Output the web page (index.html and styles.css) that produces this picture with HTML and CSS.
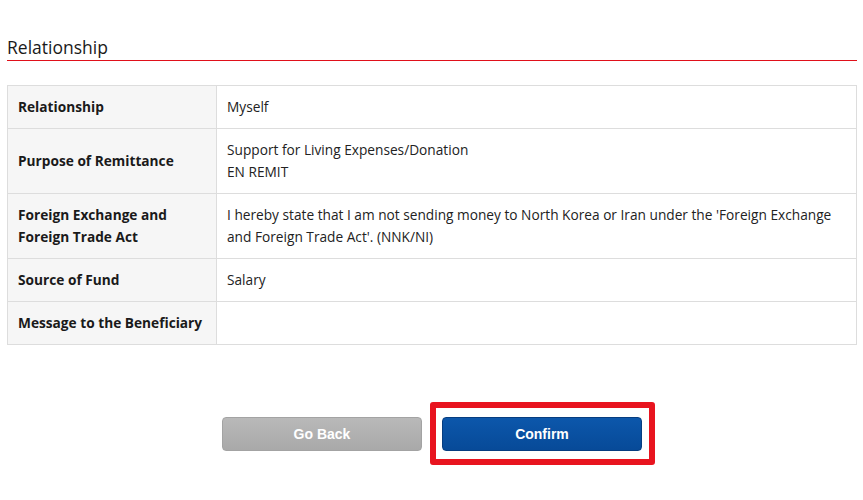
FILE: index.html
```html
<!DOCTYPE html>
<html lang="en">
<head>
<meta charset="utf-8">
<title>Relationship</title>
<link rel="stylesheet" href="styles.css">
</head>
<body>
<div class="page">
  <h2 class="section-title">Relationship</h2>
  <table class="info-table">
    <tr class="row-1">
      <th>Relationship</th>
      <td>Myself</td>
    </tr>
    <tr class="row-2">
      <th>Purpose of Remittance</th>
      <td>Support for Living Expenses/Donation<br>EN REMIT</td>
    </tr>
    <tr class="row-2">
      <th>Foreign Exchange and Foreign Trade Act</th>
      <td>I hereby state that I am not sending money to North Korea or Iran under the 'Foreign Exchange and Foreign Trade Act'. (NNK/NI)</td>
    </tr>
    <tr class="row-1">
      <th>Source of Fund</th>
      <td>Salary</td>
    </tr>
    <tr class="row-1">
      <th>Message to the Beneficiary</th>
      <td></td>
    </tr>
  </table>
  <div class="actions">
    <button class="btn btn-back" type="button">Go Back</button>
    <div class="confirm-wrap">
      <button class="btn btn-confirm" type="button">Confirm</button>
      <span class="highlight"></span>
    </div>
  </div>
</div>
</body>
</html>
```

FILE: styles.css
```css
html, body {
  margin: 0;
  padding: 0;
  background: #ffffff;
}

body {
  font-family: "Open Sans", "DejaVu Sans", sans-serif;
  color: #222222;
  min-height: 500px;
}

.page {
  padding: 32px 6px 40px 7px;
}

.section-title {
  margin: 0;
  font-size: 17.5px;
  font-weight: normal;
  line-height: 26px;
  color: #1a1a1a;
  padding-top: 2px;
  padding-bottom: 0;
  border-bottom: 1px solid #e0101a;
}

.info-table {
  width: 850px;
  margin-top: 24px;
  border-collapse: collapse;
  font-size: 13.7px;
  line-height: 22px;
}

.info-table th,
.info-table td {
  border: 1px solid #dddddd;
  padding: 10px 10px 10px 10px;
  vertical-align: middle;
  text-align: left;
}

.info-table th {
  width: 188px;
  background: #f6f6f6;
  font-weight: bold;
  color: #1a1a1a;
}

.info-table td {
  background: #ffffff;
  color: #222222;
}

.row-1 th, .row-1 td {
  height: 22px;
}

.actions {
  display: flex;
  justify-content: center;
  gap: 20px;
  margin-top: 72px;
}

.confirm-wrap {
  position: relative;
}

.btn {
  display: block;
  width: 200px;
  height: 34px;
  border-radius: 4px;
  font-family: "Liberation Sans", Arial, sans-serif;
  font-size: 14px;
  font-weight: bold;
  color: #ffffff;
  cursor: pointer;
  padding: 0;
}

.btn-back {
  background: linear-gradient(#b9b9b9, #a9a9a9);
  border: 1px solid #a3a3a3;
}

.btn-confirm {
  background: linear-gradient(#0c57ab, #074a98);
  border: 1px solid #063d80;
}

.highlight {
  position: absolute;
  left: -12px;
  top: -15px;
  width: 225px;
  height: 63px;
  box-sizing: border-box;
  border: 6px solid #e8141f;
  border-radius: 3px;
  pointer-events: none;
}
```
